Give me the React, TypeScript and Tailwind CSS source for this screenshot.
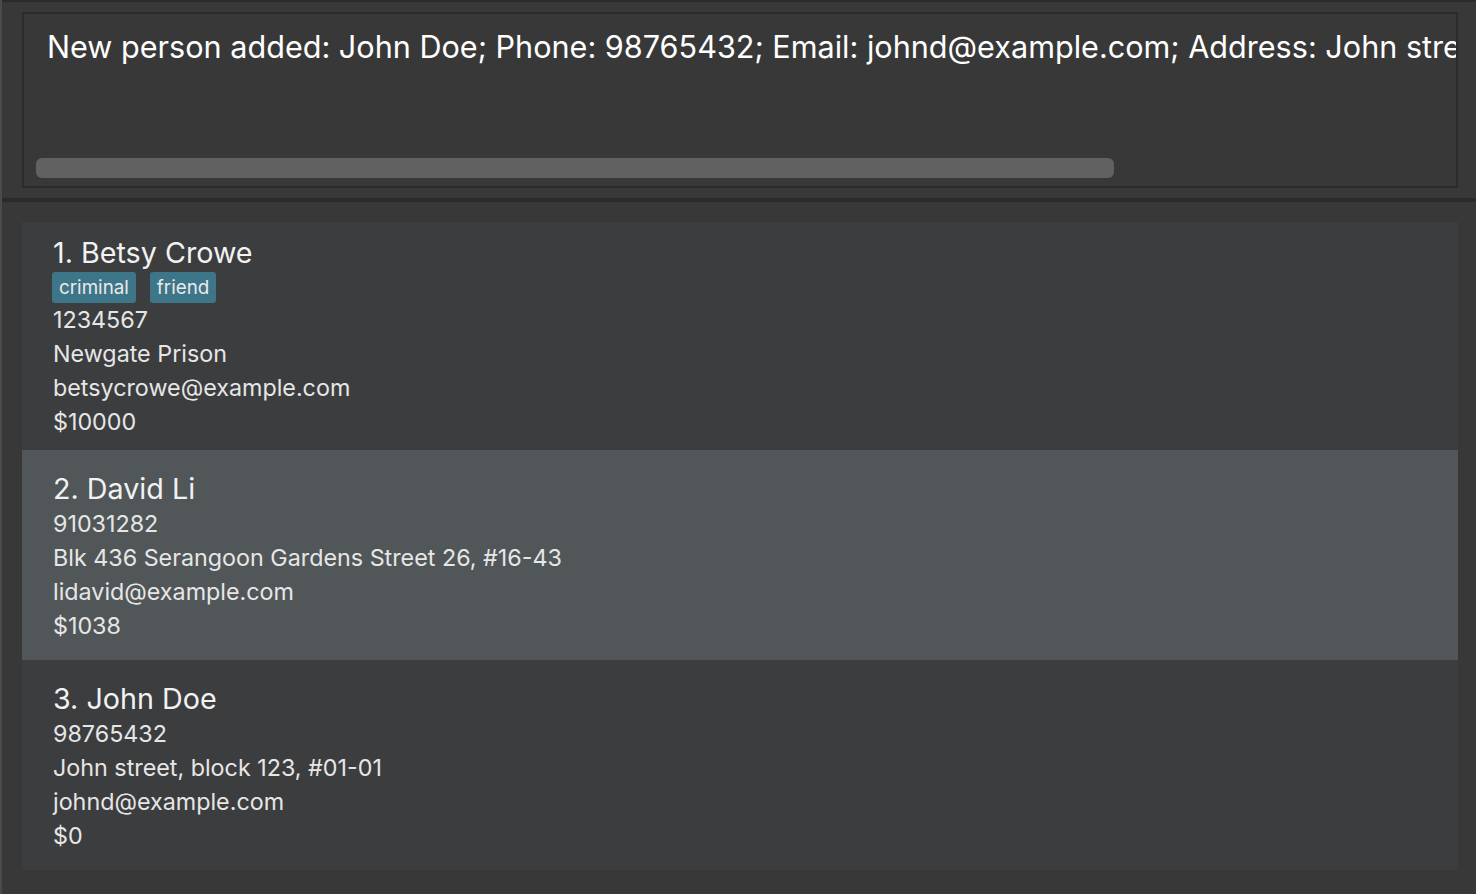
import React from "react";

// ─── 型 ──────────────────────────────────────────────────────────────────────
type Person = {
  name: string;
  tags: string[];
  phone: string;
  address: string;
  email: string;
  balance: string;
};

const PEOPLE: Person[] = [
  {
    name: "Betsy Crowe",
    tags: ["criminal", "friend"],
    phone: "1234567",
    address: "Newgate Prison",
    email: "betsycrowe@example.com",
    balance: "$10000",
  },
  {
    name: "David Li",
    tags: [],
    phone: "91031282",
    address: "Blk 436 Serangoon Gardens Street 26, #16-43",
    email: "lidavid@example.com",
    balance: "$1038",
  },
  {
    name: "John Doe",
    tags: [],
    phone: "98765432",
    address: "John street, block 123, #01-01",
    email: "johnd@example.com",
    balance: "$0",
  },
];

const SELECTED = 1;

const FONT = "font-['Inter','Open_Sans','Liberation_Sans',sans-serif]";

function PersonCard({ p, index }: { p: Person; index: number }) {
  const selected = index === SELECTED;
  const hasTags = p.tags.length > 0;
  return (
    <div
      className={`pl-[31px] ${hasTags ? "pt-[13px] pb-[11px]" : "pt-[21px] pb-[17px]"} ${
        selected ? "bg-[#515659]" : "bg-[#3c3d3f]"
      }`}
    >
      <div className="h-[36px] leading-[36px] text-[28.7px] text-[#f2f2f2]">
        {index + 1}. {p.name}
      </div>
      {hasTags && (
        <div className="flex gap-[14px] h-[32px] items-start pt-[1px] -ml-[1px]">
          {p.tags.map((t) => (
            <span
              key={t}
              className="h-[31px] leading-[31px] px-[7px] rounded-[3px] bg-[#3e7689] text-[18.8px] text-[#eaeaea]"
            >
              {t}
            </span>
          ))}
        </div>
      )}
      {[p.phone, p.address, p.email, p.balance].map((line, i) => (
        <div key={i} className="h-[34px] leading-[34px] text-[23.3px] text-[#e6e6e6]">
          {line}
        </div>
      ))}
    </div>
  );
}

export default function App() {
  return (
    <div className={`w-[1476px] h-[894px] bg-[#383838] border-l-2 border-[#4a4a4a] overflow-hidden ${FONT}`}>
      {/* 結果表示 */}
      <div className="h-[202px] border-t-2 border-b-4 border-[#2b2b2b] pt-[10px] pl-[20px] pr-[18px]">
        <div className="h-[176px] border-2 border-[#2b2b2b] bg-[#383838] flex flex-col">
          <div className="pl-[23px] pr-[2px] pt-[13px] overflow-hidden">
            <div className="whitespace-nowrap text-[30.6px] leading-[40px] text-white">
              New person added: John Doe; Phone: 98765432; Email: johnd@example.com; Address: John street, block 123, #01-01; Tags:
            </div>
          </div>
          <div className="mt-auto mb-[8px] ml-[12px] w-[1078px] h-[20px] rounded-[6px] bg-[#616161]" />
        </div>
      </div>

      {/* 人物リスト */}
      <div className="pt-[20px] pl-[20px] pr-[18px]">
        {PEOPLE.map((p, i) => (
          <PersonCard key={p.name} p={p} index={i} />
        ))}
      </div>
    </div>
  );
}
